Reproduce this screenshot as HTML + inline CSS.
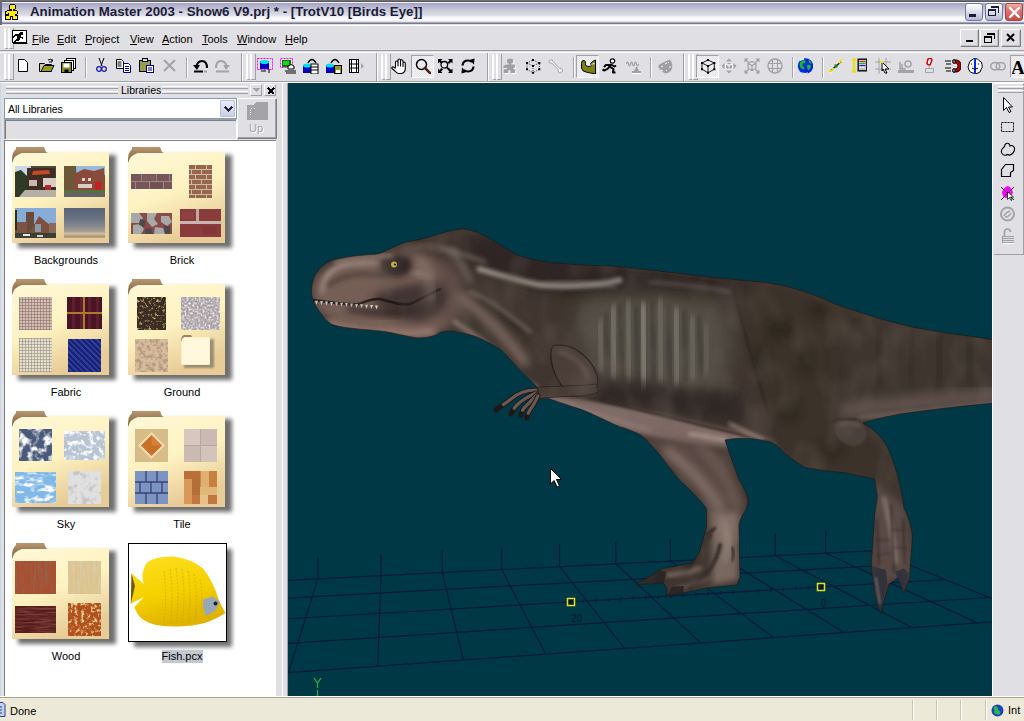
<!DOCTYPE html><html><head><meta charset="utf-8"><style>
*{margin:0;padding:0;box-sizing:border-box}
html,body{width:1024px;height:721px;overflow:hidden;background:#e0dfe3;font-family:"Liberation Sans",sans-serif;font-size:11px;color:#000;position:relative}
.a{position:absolute}
#title{left:0;top:0;width:1024px;height:26px;background:linear-gradient(#7a7060 0,#7a7060 1px,#505878 1px,#505878 2px,#f0f4f4 2px,#f0f4f4 3px,#a8a0c0 3px,#b4b4d0 6px,#c8cad8 10px,#dcdce8 15px,#f4f4f8 17px,#ffffff 20px,#d8d8e0 22px,#787898 23px,#787898 24px,#c8c8cc 24px,#ffffff 25px,#ffffff 26px)}
#ttext{left:30px;top:4px;font-weight:bold;font-size:13.3px;color:#1c1c38;white-space:nowrap}
.tbtn{top:3px;width:18px;height:18px;border:1px solid #7478a0;border-radius:3px;background:linear-gradient(#ffffff,#eaeaf2 35%,#b4b8d2)}
.mi{top:33px;font-size:11px;color:#000;white-space:nowrap}
.mi u{text-decoration:none;background:linear-gradient(#000,#000) 0 100%/100% 1px no-repeat;padding-bottom:0}
.grip{width:7px;}
.grip:before,.grip:after{content:"";position:absolute;top:0;bottom:0;width:3px;border-left:2px solid #fff;border-right:1px solid #a0a0a4;border-bottom:1px solid #a0a0a4}
.grip:before{left:0}.grip:after{left:4px}
.vsep{width:2px;border-left:1px solid #a6a6aa;border-right:1px solid #fff}
.press{border:1px solid;border-color:#a0a0a4 #fff #fff #a0a0a4;background:repeating-conic-gradient(#f4f4f6 0 25%,#e4e4e8 0 50%) 0 0/2px 2px}
.mdib{top:29px;width:19px;height:18px;border:1px solid;border-color:#fff #808080 #808080 #fff;box-shadow:inset -1px -1px 0 #c0c0c0}
.lbl{font-size:11px;color:#000;text-align:center;width:116px;white-space:nowrap;line-height:13px}
.th{position:absolute}
</style></head><body>
<div id="title" class="a"></div>
<div class="a" style="left:0;top:1px;width:2px;height:24px;background:#6a6a88"></div>
<svg class="a" style="left:0px;top:0px" width="24" height="24" viewBox="0 0 24 24" shape-rendering="crispEdges"><path d="M10.5 4.5h4l1 1v3l-1 1h-1v1h3l1 1v2l-1 1h-1v1h1.5l0.5 0.5v3.5h-5v-3h-2v3h-5v-3.5l0.5-0.5h2.5v-2l-1 1h-1.5l-1-1v-1l1-1l2-1h3v-1h-1l-1-1v-3z" fill="#ffee00" stroke="#000" stroke-width="1"/></svg>
<div id="ttext" class="a">Animation Master 2003 - Show6 V9.prj * - [TrotV10 [Birds Eye]]</div>
<div class="a tbtn" style="left:965px"><div class="a" style="left:3px;top:10px;width:7px;height:3px;background:#1c1c38"></div></div>
<div class="a tbtn" style="left:985px"><div class="a" style="left:2px;top:5px;width:8px;height:7px;border:1px solid #1c1c38;border-top-width:2px;background:transparent"></div><div class="a" style="left:5px;top:2px;width:8px;height:7px;border-top:2px solid #1c1c38;border-right:1px solid #1c1c38"></div></div>
<div class="a tbtn" style="left:1005px;border-color:#9a4848;background:linear-gradient(#f4b0a4,#e47a70 35%,#cc4a4a)"><svg class="a" style="left:2px;top:2px" width="13" height="13" viewBox="0 0 13 13"><path d="M2 2L11 11M11 2L2 11" stroke="#fff" stroke-width="2.4" stroke-linecap="round"/></svg></div>
<div class="a" style="left:0;top:26px;width:1024px;height:25px;background:#e0dfe3;border-bottom:1px solid #a0a0a4"></div>
<div class="a" style="left:0;top:52px;width:1024px;height:1px;background:#fff"></div>
<div class="a grip" style="left:4px;top:28px;height:21px"></div>
<svg class="a" style="left:12px;top:30px" width="16" height="16" viewBox="0 0 16 16" shape-rendering="crispEdges"><rect x="0.5" y="0.5" width="14" height="12" fill="#fff" stroke="#000"/><path d="M8 2h3v3h-2v2h2v2h-1v-1h-2v1l-2 2h-2v2h-2v-2l2-1l1-2v-2h-2l-2 2v-2l2-2h3z" fill="#000"/><path d="M1 13h14" stroke="#000"/><path d="M15 13.5h1" stroke="#20a060"/></svg>
<div class="a mi" style="left:32px"><u>F</u>ile</div>
<div class="a mi" style="left:57px"><u>E</u>dit</div>
<div class="a mi" style="left:85px"><u>P</u>roject</div>
<div class="a mi" style="left:130px"><u>V</u>iew</div>
<div class="a mi" style="left:162px"><u>A</u>ction</div>
<div class="a mi" style="left:202px"><u>T</u>ools</div>
<div class="a mi" style="left:237px"><u>W</u>indow</div>
<div class="a mi" style="left:285px"><u>H</u>elp</div>
<div class="a mdib" style="left:960px"><div class="a" style="left:5px;top:10px;width:7px;height:2px;background:#000"></div></div>
<div class="a mdib" style="left:980px"><div class="a" style="left:3px;top:6px;width:8px;height:7px;border:1px solid #000;border-top-width:2px"></div><div class="a" style="left:6px;top:3px;width:8px;height:6px;border-top:2px solid #000;border-right:1px solid #000"></div></div>
<div class="a mdib" style="left:1001px;width:20px"><svg class="a" style="left:4px;top:3px" width="10" height="10" viewBox="0 0 10 10" shape-rendering="crispEdges"><path d="M1 1l7 7M8 1l-7 7" stroke="#000" stroke-width="2" shape-rendering="auto"/></svg></div>
<div class="a" style="left:0;top:81px;width:1024px;height:1px;background:#a0a0a4"></div>
<div class="a" style="left:0;top:82px;width:1024px;height:1px;background:#fff"></div>
<div class="a grip" style="left:4px;top:54px;height:26px"></div>
<div class="a grip" style="left:246px;top:54px;height:26px"></div>
<div class="a grip" style="left:381px;top:54px;height:26px"></div>
<div class="a grip" style="left:492px;top:54px;height:26px"></div>
<div class="a grip" style="left:688px;top:54px;height:26px"></div>
<div class="a" style="left:241px;top:53px;width:1px;height:28px;background:#a0a0a4"></div>
<div class="a" style="left:242px;top:53px;width:1px;height:28px;background:#fff"></div>
<div class="a" style="left:376px;top:53px;width:1px;height:28px;background:#a0a0a4"></div>
<div class="a" style="left:377px;top:53px;width:1px;height:28px;background:#fff"></div>
<div class="a" style="left:487px;top:53px;width:1px;height:28px;background:#a0a0a4"></div>
<div class="a" style="left:488px;top:53px;width:1px;height:28px;background:#fff"></div>
<div class="a" style="left:683px;top:53px;width:1px;height:28px;background:#a0a0a4"></div>
<div class="a" style="left:684px;top:53px;width:1px;height:28px;background:#fff"></div>
<div class="a vsep" style="left:85px;top:57px;height:21px"></div>
<div class="a vsep" style="left:186px;top:57px;height:21px"></div>
<div class="a vsep" style="left:573px;top:57px;height:21px"></div>
<div class="a vsep" style="left:650px;top:57px;height:21px"></div>
<div class="a vsep" style="left:792px;top:57px;height:21px"></div>
<div class="a vsep" style="left:822px;top:57px;height:21px"></div>
<div class="a press" style="left:411px;top:55px;width:23px;height:23px"></div>
<div class="a press" style="left:576px;top:55px;width:23px;height:23px"></div>
<div class="a press" style="left:696px;top:55px;width:23px;height:23px"></div>
<div class="a press" style="left:1010px;top:55px;width:20px;height:23px"></div>
<svg class="a" style="left:17px;top:59px" width="16" height="16" viewBox="0 0 16 16"><path d="M1.5 0.5h6l3 3v9h-9z" fill="#fff" stroke="#000"/></svg>
<svg class="a" style="left:39px;top:58px" width="16" height="16" viewBox="0 0 16 16"><path d="M0.5 5.5h5l1 1h6v7h-12z" fill="#c8c890" stroke="#000"/><path d="M2 13.5l3-6h10l-3 6z" fill="#9a9a20" stroke="#000"/><path d="M9 2q3-2 5 1" fill="none" stroke="#000"/><path d="M13 1v3h-3" fill="none" stroke="#000"/></svg>
<svg class="a" style="left:61px;top:58px" width="16" height="16" viewBox="0 0 16 16"><rect x="5.5" y="0.5" width="9" height="10" fill="#fff" stroke="#000"/><rect x="3.5" y="2.5" width="9" height="10" fill="#fff" stroke="#000"/><rect x="0.5" y="4.5" width="10" height="10" fill="#8a8a20" stroke="#000"/><rect x="2.5" y="5.5" width="6" height="4" fill="#fff"/><rect x="3.5" y="11.5" width="4" height="3" fill="#000"/></svg>
<svg class="a" style="left:96px;top:58px" width="16" height="16" viewBox="0 0 16 16"><path d="M3 0l3 8M8 0l-3 8" stroke="#000" fill="none"/><circle cx="3" cy="11" r="2.3" fill="none" stroke="#1a1aa8" stroke-width="1.3"/><circle cx="8" cy="11" r="2.3" fill="none" stroke="#1a1aa8" stroke-width="1.3"/></svg>
<svg class="a" style="left:116px;top:58px" width="16" height="16" viewBox="0 0 16 16"><path d="M0.5 1.5h5l2 2v7h-7z" fill="#fff" stroke="#000"/><path d="M1.5 4h4M1.5 6h4M1.5 8h4" stroke="#000"/><path d="M7.5 5.5h5l2 2v7h-7z" fill="#fff" stroke="#000080"/><path d="M9 8.5h4M9 10.5h4M9 12.5h4" stroke="#000080"/></svg>
<svg class="a" style="left:139px;top:58px" width="16" height="16" viewBox="0 0 16 16"><rect x="0.5" y="2.5" width="11" height="11" fill="#9a9a50" stroke="#000"/><rect x="3.5" y="0.5" width="5" height="3" fill="#ddd" stroke="#000"/><rect x="7.5" y="7.5" width="7" height="7" fill="#fff" stroke="#000080"/><path d="M9 10h4M9 12h4" stroke="#000080"/></svg>
<svg class="a" style="left:163px;top:59px" width="16" height="16" viewBox="0 0 16 16"><path d="M1 1l11 11M12 1l-11 11" stroke="#a4a4a4" stroke-width="2"/></svg>
<svg class="a" style="left:193px;top:59px" width="16" height="16" viewBox="0 0 16 16"><path d="M3 9q1-7 6-7t5 7" fill="none" stroke="#000" stroke-width="2"/><path d="M0 6l4 5l3-5z" fill="#000"/><path d="M1 12.5h9" stroke="#000" stroke-width="2"/><path d="M11 12.5h3" stroke="#a4a4a4" stroke-width="2"/></svg>
<svg class="a" style="left:215px;top:59px" width="16" height="16" viewBox="0 0 16 16"><path d="M11 9q-1-7-6-7t-5 7" fill="none" stroke="#a4a4a4" stroke-width="2" transform="translate(1,0)"/><path d="M15 6l-4 5l-3-5z" fill="#a4a4a4"/><path d="M1 12.5h13" stroke="#a4a4a4" stroke-width="2"/></svg>
<svg class="a" style="left:257px;top:58px" width="16" height="16" viewBox="0 0 16 16"><rect x="0.5" y="0.5" width="15" height="11" fill="none" stroke="#ff00ff" stroke-dasharray="2 1"/><rect x="3" y="3" width="9" height="8" fill="#0000c0"/><ellipse cx="7.5" cy="4" rx="4.5" ry="2" fill="#00e0f0"/><path d="M4 13h5M12 11v4" stroke="#000"/></svg>
<svg class="a" style="left:280px;top:58px" width="16" height="16" viewBox="0 0 16 16"><rect x="0.5" y="0.5" width="12" height="9" fill="none" stroke="#ff00ff" stroke-dasharray="2 1"/><rect x="2" y="2" width="9" height="7" fill="#008000"/><path d="M3 3h6v4h-6z" fill="#20d020"/><path d="M8 8q3-3 6 0v3h-6z" fill="#fff" stroke="#000"/><path d="M5 13h11M6 15h10" stroke="#000"/></svg>
<svg class="a" style="left:303px;top:58px" width="16" height="16" viewBox="0 0 16 16"><path d="M5 5q4-7 8 0" fill="none" stroke="#000" stroke-width="1.5"/><rect x="0" y="7" width="8" height="8" fill="#0000c0"/><ellipse cx="4" cy="7.5" rx="4" ry="2" fill="#00e0f0"/><rect x="8" y="6" width="7" height="10" fill="#fff" stroke="#000"/><path d="M8 9h7M8 12h7" stroke="#000"/></svg>
<svg class="a" style="left:326px;top:58px" width="16" height="16" viewBox="0 0 16 16"><path d="M5 5q4-7 8 0" fill="none" stroke="#000" stroke-width="1.5"/><rect x="0" y="7" width="8" height="8" fill="#0000c0"/><ellipse cx="4" cy="7.5" rx="4" ry="2" fill="#00e0f0"/><rect x="8.5" y="7.5" width="7" height="8" fill="#9a9a20" stroke="#000"/><rect x="10" y="12" width="4" height="3" fill="#fff"/></svg>
<svg class="a" style="left:349px;top:58px" width="16" height="16" viewBox="0 0 16 16"><rect x="0.5" y="1.5" width="9" height="13" fill="#fff" stroke="#000"/><path d="M2.5 1.5v13M7.5 1.5v13M0.5 6h9M0.5 10h9" stroke="#000"/><path d="M12 5l3 3l-3 3z" fill="#a4a4a4"/></svg>
<svg class="a" style="left:391px;top:58px" width="16" height="16" viewBox="0 0 16 16"><path d="M4.5 9.5V4.5Q4.5 3 5.7 3Q7 3 7 4.5V8V2.5Q7 1 8.3 1Q9.5 1 9.5 2.5V8V3Q9.5 1.8 10.7 1.8Q12 1.8 12 3V8.5V5Q12 4 13 4Q14.3 4 14.3 5.2V10.5Q14.3 15 10 15.5H7.5Q5.5 15 4 13L1 10.5Q0.5 9.5 1.5 9Q2.5 8.5 4.5 10.5" fill="#fff" stroke="#000" stroke-width="1.1" stroke-linejoin="round"/></svg>
<svg class="a" style="left:415px;top:58px" width="16" height="16" viewBox="0 0 16 16"><circle cx="6.5" cy="6.5" r="5" fill="none" stroke="#000" stroke-width="1.5"/><path d="M10 10l5 5" stroke="#501818" stroke-width="2.5" stroke-linecap="square"/></svg>
<svg class="a" style="left:437px;top:58px" width="16" height="16" viewBox="0 0 16 16"><path d="M1 1h4.5l-1.5 1.5l2 2l-1.5 1.5l-2-2l-1.5 1.5zM15.5 1h-4.5l1.5 1.5l-2 2l1.5 1.5l2-2l1.5 1.5zM1 15h4.5l-1.5-1.5l2-2l-1.5-1.5l-2 2l-1.5-1.5zM15.5 15h-4.5l1.5-1.5l-2-2l1.5-1.5l2 2l1.5-1.5z" fill="#000"/><circle cx="7.3" cy="6.8" r="3.3" fill="#e8e8e8" stroke="#000" stroke-width="1.3"/><path d="M9.8 9.3l3 3" stroke="#000" stroke-width="1.8"/></svg>
<svg class="a" style="left:460px;top:58px" width="16" height="16" viewBox="0 0 16 16"><path d="M2.5 7.5Q3 2.5 8 2.5Q10.5 2.5 12 4" fill="none" stroke="#000" stroke-width="2.2"/><path d="M9.5 2L14.5 0.5L14 6.5Z" fill="#000"/><path d="M13.5 8.5Q13 13.5 8 13.5Q5.5 13.5 4 12" fill="none" stroke="#000" stroke-width="2.2"/><path d="M6.5 14L1.5 15.5L2 9.5Z" fill="#000"/></svg>
<svg class="a" style="left:503px;top:58px" width="16" height="16" viewBox="0 0 16 16"><g transform="translate(-4.5,-3.5) scale(0.95)"><path d="M10.5 4.5h4l1 1v3l-1 1h-1v1h3l1 1v2l-1 1h-1v1h1.5l0.5 0.5v3.5h-5v-3h-2v3h-5v-3.5l0.5-0.5h2.5v-2l-1 1h-1.5l-1-1v-1l1-1l2-1h3v-1h-1l-1-1v-3z" fill="#fff" transform="translate(1,1)"/><path d="M10.5 4.5h4l1 1v3l-1 1h-1v1h3l1 1v2l-1 1h-1v1h1.5l0.5 0.5v3.5h-5v-3h-2v3h-5v-3.5l0.5-0.5h2.5v-2l-1 1h-1.5l-1-1v-1l1-1l2-1h3v-1h-1l-1-1v-3z" fill="#a0a0a4"/></g></svg>
<svg class="a" style="left:525px;top:58px" width="16" height="16" viewBox="0 0 16 16"><path d="M8 2L14.3 5V11.2L8 14.8L2 11.2V5Z M2 5L8 8L14.3 5 M8 8V14.8" fill="none" stroke="#000" stroke-width="0.7" stroke-dasharray="1 1"/><path d="M7 1h2v2h-2zM13.3 4h2v2h-2zM13.3 10.2h2v2h-2zM7 13.8h2v2h-2zM1 10.2h2v2h-2zM1 4h2v2h-2zM7 7h2v2h-2z" fill="#000"/></svg>
<svg class="a" style="left:548px;top:58px" width="16" height="16" viewBox="0 0 16 16"><path d="M2.5 2.2 Q4.5 1 5 3.5 L11.5 10.5 Q14 10 14.5 12 Q15 14 13 14 Q13 15.5 11 15 Q10 13 10.5 12 L3.8 5 Q1 5.5 1 3.8 Q1 2 2.5 2.2Z" fill="#fff" stroke="#a0a0a4" stroke-width="1"/></svg>
<svg class="a" style="left:580px;top:58px" width="16" height="16" viewBox="0 0 16 16"><path d="M1.5 5.5 Q1.5 2 4 2.5 Q6 3 5.5 5.5 Q5 7 6.5 8 Q9 9.5 11.5 7.5 L10.5 5.5 L12.5 3.5 L15.5 2 L15.5 16 L10.5 15 Q8 14.5 6 14 Q2 13.5 1.5 10 Z" fill="#808010" stroke="#000" stroke-width="1"/><path d="M11 7.5 L13 5.5 L15 6" stroke="#fff" stroke-width="0.8" fill="none"/></svg>
<svg class="a" style="left:601px;top:58px" width="16" height="16" viewBox="0 0 16 16"><circle cx="11.5" cy="3" r="2.2" fill="#fff" stroke="#000" stroke-width="1.2"/><path d="M10 6 L7 10.5 L3.5 12.5 L1.5 11.5 M8.5 8.5 L12.5 11 L12 14.5 L14.5 14.5 M8.5 7 L5 7 L3 9 M10 6.5 L13.5 8.5 L15 7.5" fill="none" stroke="#000" stroke-width="2" stroke-linejoin="round"/></svg>
<svg class="a" style="left:625px;top:58px" width="16" height="16" viewBox="0 0 16 16"><path d="M0.5 5 q1-4 2 0 q1 4 2 0 q1-4 2 0 q1 4 2 0 q1-4 2 0 q1 4 2 0" fill="none" stroke="#a0a0a4" stroke-width="1.2" transform="translate(1,1)"/><path d="M11 9 L9 13 L7 13 L7 15 L16 15 L16 13 L14 13 L12 9Z" fill="#a0a0a4"/><path d="M7 15.5h9" stroke="#fff"/></svg>
<svg class="a" style="left:657px;top:58px" width="16" height="16" viewBox="0 0 16 16"><path d="M1 8 Q3 5 13 1.5 Q16 5 15 11 Q13 15 8 15.5 Q3 13 1 8Z" fill="#a0a0a4"/><path d="M4 9l2-1M8 6l2-1M11 4l1 1M13 8l0 2M10 12l-1 1M6 13l-2-1" stroke="#fff" stroke-width="0.9"/></svg>
<svg class="a" style="left:700px;top:58px" width="16" height="16" viewBox="0 0 16 16"><path d="M8 2L14.3 5V11.2L8 14.8L2 11.2V5Z M2 5L8 8L14.3 5 M8 8V14.8" fill="none" stroke="#000" stroke-width="0.9"/><path d="M7 1h2v2h-2zM13.3 4h2v2h-2zM13.3 10.2h2v2h-2zM7 13.8h2v2h-2zM1 10.2h2v2h-2zM1 4h2v2h-2zM7 7h2v2h-2z" fill="#000"/></svg>
<svg class="a" style="left:721px;top:58px" width="16" height="16" viewBox="0 0 16 16"><path d="M8 0.5l3 3h-6zM8 15.5l3-3h-6zM0.5 8l3-3v6zM15.5 8l-3-3v6z" fill="#a0a0a4"/><path d="M8 4L11.5 6V10L8 12L4.5 10V6Z M4.5 6L8 8L11.5 6M8 8V12" fill="#a0a0a4" stroke="#fff" stroke-width="0.8"/></svg>
<svg class="a" style="left:744px;top:58px" width="16" height="16" viewBox="0 0 16 16"><path d="M0.5 0.5h4l-1.5 1.5l2 2l-1 1l-2-2l-1.5 1.5zM15.5 0.5h-4l1.5 1.5l-2 2l1 1l2-2l1.5 1.5zM0.5 15.5h4l-1.5-1.5l2-2l-1-1l-2 2l-1.5-1.5zM15.5 15.5h-4l1.5-1.5l-2-2l1-1l2 2l1.5-1.5z" fill="#a0a0a4"/><path d="M8 3.5L12 5.5V10.5L8 12.5L4 10.5V5.5Z M4 5.5L8 7.5L12 5.5M8 7.5V12.5" fill="none" stroke="#a0a0a4" stroke-width="1.2"/></svg>
<svg class="a" style="left:767px;top:58px" width="16" height="16" viewBox="0 0 16 16"><circle cx="8" cy="8" r="7" fill="none" stroke="#a0a0a4" stroke-width="1.3"/><path d="M1.5 5.5h13M1.5 10.5h13M5.5 1.5v13M10.5 1.5v13" stroke="#a0a0a4" stroke-width="1.1"/></svg>
<svg class="a" style="left:797px;top:58px" width="16" height="16" viewBox="0 0 16 16"><circle cx="8.5" cy="8" r="7.7" fill="#0028e0"/><path d="M3 4.5q2-3 5-2.5q1 2 0 3q-3 0-2.5 3q2 1 2 3q-2 1-3.5-1q-2-2-1-5.5z" fill="#10c020"/><path d="M10 7q3-1 4 1q-1 4-3 4q-1-2-1-5z" fill="#10c020"/><path d="M11 1.5q3 1 4 4l-2 0z" fill="#10c020"/><path d="M3 2.5q2-1.5 4-1.5" stroke="#fff" stroke-width="1.5"/><path d="M5 15q3 1 6 0" stroke="#fff" stroke-width="1"/></svg>
<svg class="a" style="left:828px;top:58px" width="16" height="16" viewBox="0 0 16 16"><path d="M2 13.5L8 8L14 3" stroke="#000" stroke-width="1.2" fill="none"/><path d="M1 11.5h3v3h-3zM4 10h2v2h-2zM12.5 1.5h3v3h-3zM10.5 3.5h2v2h-2z" fill="#f0e010"/><rect x="6.5" y="6.5" width="3" height="3" fill="#108a10"/><path d="M1.5 15h2M15 2v2" stroke="#fff"/></svg>
<svg class="a" style="left:851px;top:58px" width="16" height="16" viewBox="0 0 16 16"><path d="M1 1.5h4M3 1.5v12M1 13.5h4" stroke="#f0e010" stroke-width="2.4"/><rect x="7" y="1" width="9" height="12" fill="#404040" stroke="#000"/><rect x="8" y="2" width="7" height="10" fill="#c0c0c8"/><path d="M8.5 3.5h6" stroke="#e02020"/><path d="M8.5 5.5h6" stroke="#10c010"/><path d="M8.5 7.5h6" stroke="#2020e0"/><path d="M8.5 9.5h2M11.5 9.5h2" stroke="#fff"/></svg>
<svg class="a" style="left:875px;top:58px" width="16" height="16" viewBox="0 0 16 16"><path d="M0 4h16M0 11h16M4 0v16M11 0v16" stroke="#a4a4a4"/><path d="M7 4l7 7h-4l2 4h-2l-2-4l-1 2z" fill="#fff" stroke="#000"/><path d="M5 3h3v2h-3z" fill="#f0f000"/></svg>
<svg class="a" style="left:898px;top:58px" width="16" height="16" viewBox="0 0 16 16"><path d="M0 12h16v3h-16z" fill="#a4a4a4"/><path d="M2 4v7h6M4 6v5" stroke="#a4a4a4" stroke-width="1.5" fill="none"/><circle cx="10" cy="6" r="3" fill="none" stroke="#a4a4a4" stroke-width="1.5"/></svg>
<svg class="a" style="left:924px;top:58px" width="16" height="16" viewBox="0 0 16 16"><path d="M4 1q3-2 4 1l-2 5q-3 0-3-2z" fill="#fff" stroke="#e00000" stroke-width="1.5"/><path d="M5 7v4M1.5 10.5h8v4h-8z" fill="none" stroke="#a4a4a4"/></svg>
<svg class="a" style="left:945px;top:58px" width="16" height="16" viewBox="0 0 16 16"><path d="M8 2h3q5 0 5 6t-5 6h-3v-3h3q2 0 2-3t-2-3h-3z" fill="#c00000" stroke="#000"/><path d="M8 2h2v3h-2zM8 11h2v3h-2z" fill="#fff" stroke="#000"/><path d="M0 3h6M1 6h5M0 10h6M1 13h5" stroke="#000"/></svg>
<svg class="a" style="left:967px;top:58px" width="16" height="16" viewBox="0 0 16 16"><path d="M8 0.5q3 0 4 2q3 1 3 4q1 3-1 5q0 3-3 3.5q-2 1.5-5 0q-3 0-4-3q-2-3 0-6q0-3 3-4q1-1.5 3-1.5z" fill="#fff" stroke="#000"/><path d="M8 0v16" stroke="#0030e0" stroke-width="2"/><path d="M4 6h1M11 6h1M5 10q3 3 6 0" stroke="#000" fill="none"/></svg>
<svg class="a" style="left:990px;top:58px" width="16" height="16" viewBox="0 0 16 16"><rect x="0.75" y="4.75" width="9" height="7" rx="3.5" fill="none" stroke="#a4a4a4" stroke-width="1.5"/><rect x="6.25" y="4.75" width="9" height="7" rx="3.5" fill="none" stroke="#a4a4a4" stroke-width="1.5"/></svg>
<svg class="a" style="left:1012px;top:58px" width="16" height="16" viewBox="0 0 16 16"><text x="-1" y="16" font-family="Liberation Serif" font-size="19" font-weight="bold" fill="#000">A</text></svg>
<div class="a" style="left:6px;top:86px;width:112px;height:3px;border-top:1px solid #fff;border-bottom:1px solid #a0a0a4;background:#e0dfe3"></div>
<div class="a" style="left:162px;top:86px;width:86px;height:3px;border-top:1px solid #fff;border-bottom:1px solid #a0a0a4;background:#e0dfe3"></div>
<div class="a" style="left:6px;top:91px;width:112px;height:3px;border-top:1px solid #fff;border-bottom:1px solid #a0a0a4;background:#e0dfe3"></div>
<div class="a" style="left:162px;top:91px;width:86px;height:3px;border-top:1px solid #fff;border-bottom:1px solid #a0a0a4;background:#e0dfe3"></div>
<div class="a" style="left:121px;top:84px;font-size:10.5px;line-height:13px">Libraries</div>
<div class="a" style="left:250px;top:84px;width:12px;height:12px;border:1px solid;border-color:#fff #a0a0a4 #a0a0a4 #fff"><svg class="a" style="left:2px;top:3px" width="7" height="5" viewBox="0 0 7 5" shape-rendering="crispEdges"><path d="M0 0h7l-3.5 4z" fill="#a4a4a4"/></svg></div>
<div class="a" style="left:264px;top:84px;width:12px;height:12px;border:1px solid;border-color:#fff #a0a0a4 #a0a0a4 #fff"><svg class="a" style="left:2px;top:2px" width="8" height="8" viewBox="0 0 8 8" shape-rendering="crispEdges"><path d="M1 1l6 6M7 1l-6 6" stroke="#000" stroke-width="2"/></svg></div>
<div class="a" style="left:4px;top:98px;width:233px;height:21px;background:#fff;border:1px solid #7f9db9"></div>
<div class="a" style="left:8px;top:103px;font-size:10.5px;line-height:13px">All Libraries</div>
<div class="a" style="left:220px;top:100px;width:15px;height:17px;border:1px solid #b8c0d8;border-radius:1px;background:linear-gradient(#e8ecf8,#c8d0e8)"><svg class="a" style="left:3px;top:5px" width="9" height="7" viewBox="0 0 9 7" shape-rendering="crispEdges"><path d="M1 1l3.5 3.5l3.5-3.5" stroke="#202030" stroke-width="2" fill="none"/></svg></div>
<div class="a" style="left:4px;top:119px;width:233px;height:21px;border:1px solid;border-color:#a0a0a4 #fff #fff #a0a0a4;background:#e0dfe3"></div>
<div class="a" style="left:5px;top:120px;width:231px;height:19px;border-top:1px solid #808084;border-left:1px solid #808084"></div>
<div class="a" style="left:237px;top:98px;width:40px;height:41px;border:1px solid;border-color:#fff #808084 #808084 #fff;box-shadow:inset -1px -1px 0 #a0a0a4"></div>
<svg class="a" style="left:247px;top:102px" width="21" height="18" viewBox="0 0 21 18" shape-rendering="crispEdges"><path d="M0 3h7l2-3h12v18h-21z" fill="#a4a4a8"/><path d="M4 6h1M3 8h1M3 10h1M3 12h1M7 6h1" stroke="#fff"/></svg>
<div class="a" style="left:249px;top:122px;font-size:11px;color:#a4a4a8;line-height:13px;text-shadow:1px 1px 0 #fff">Up</div>
<div class="a" style="left:276px;top:140px;width:6px;height:556px;background:#e0dfe3"></div>
<div class="a" style="left:282px;top:83px;width:1px;height:613px;background:#fff"></div>
<div class="a" style="left:287px;top:83px;width:1px;height:613px;background:#a0a0a4"></div>
<div class="a" style="left:0;top:83px;width:1px;height:613px;background:#c8d8e8"></div>
<div class="a" style="left:4px;top:140px;width:272px;height:556px;background:#fff;border-left:1px solid #808084;border-top:1px solid #808084"></div>
<svg class="a" style="left:10px;top:145px" width="112" height="112" viewBox="0 0 112 112"><defs><filter id="sh" x="-20%" y="-20%" width="150%" height="150%"><feGaussianBlur stdDeviation="2.2"/></filter><linearGradient id="fb" x1="0" y1="0" x2="0.4" y2="1"><stop offset="0" stop-color="#fff8d8"/><stop offset="0.55" stop-color="#fdf2c0"/><stop offset="1" stop-color="#e8cc98"/></linearGradient><linearGradient id="tb" x1="0" y1="0" x2="0" y2="1"><stop offset="0" stop-color="#b89870"/><stop offset="1" stop-color="#7a5a3a"/></linearGradient></defs><rect x="8" y="10" width="98" height="93" fill="#404040" opacity="0.75" filter="url(#sh)"/><rect x="2" y="7" width="97" height="91" fill="url(#fb)"/><path d="M2 16 Q2 7 6 4 L6 2 L34 2 L36 7 L38 8 L12 8 Q4 10 2 18 Z" fill="url(#tb)"/></svg><svg class="th" style="left:15px;top:166px" width="41" height="31" viewBox="0 0 41 31" preserveAspectRatio="none"><rect width="41" height="31" fill="#4a4a3a"/><rect width="16" height="14" fill="#c8d8e8"/><path d="M0 6 L6 4 L12 10 L12 31 L0 31Z" fill="#2e3a26"/><path d="M12 2 L40 2 L41 26 L12 28Z" fill="#3e2e24"/><path d="M18 5 L34 4 L35 8 L17 9Z" fill="#c84a24"/><rect x="28" y="12" width="13" height="9" fill="#d8ccc4"/><rect x="30" y="19" width="6" height="7" fill="#b02828"/><path d="M4 31 L10 24 L41 24 L41 31Z" fill="#b4b0a8"/><rect x="14" y="14" width="8" height="6" fill="#c8b8b0"/></svg><svg class="th" style="left:64px;top:166px" width="41" height="31" viewBox="0 0 41 31" preserveAspectRatio="none"><rect width="41" height="31" fill="#7a5040"/><rect width="41" height="9" fill="#98b8dc"/><path d="M0 0 L12 0 L13 27 L0 27Z" fill="#6a5838"/><path d="M10 8 L20 3 L30 5 L40 2 L41 26 L10 26Z" fill="#8a4a3a"/><rect x="18" y="12" width="3" height="3" fill="#e0d8d0"/><rect x="24" y="12" width="3" height="3" fill="#e0d8d0"/><rect x="14" y="18" width="14" height="4" fill="#d8d0c8"/><rect x="31" y="16" width="6" height="8" fill="#c82020"/><rect y="24" width="41" height="3" fill="#587040"/><rect y="27" width="41" height="4" fill="#646468"/></svg><svg class="th" style="left:15px;top:208px" width="41" height="30" viewBox="0 0 41 30" preserveAspectRatio="none"><rect width="41" height="30" fill="#6a4a3a"/><rect width="41" height="16" fill="#88acd8"/><rect x="11" y="4" width="8" height="16" fill="#6a4a3a"/><path d="M14 26 L24 8 L36 18 L36 26Z" fill="#80503e"/><rect x="2" y="14" width="10" height="12" fill="#7a5444"/><rect x="34" y="15" width="7" height="11" fill="#8a6a5a"/><rect x="20" y="16" width="6" height="8" fill="#8a9aa8"/><rect y="25" width="41" height="5" fill="#3a4034"/><rect x="8" y="26" width="7" height="2" fill="#e8e8e8"/><rect x="22" y="27" width="6" height="2" fill="#d0d0d0"/><rect x="0" y="2" width="2" height="20" fill="#2a3020"/></svg><div class="th" style="left:64px;top:208px;width:41px;height:30px;background:linear-gradient(#596378 0,#687284 35%,#868a90 62%,#a8a090 78%,#d0c0a0 86%,#a89478 94%,#c0a880 100%)"></div><div class="a lbl" style="left:8px;top:254px">Backgrounds</div>
<svg class="a" style="left:126px;top:145px" width="112" height="112" viewBox="0 0 112 112"><defs><filter id="sh" x="-20%" y="-20%" width="150%" height="150%"><feGaussianBlur stdDeviation="2.2"/></filter><linearGradient id="fb" x1="0" y1="0" x2="0.4" y2="1"><stop offset="0" stop-color="#fff8d8"/><stop offset="0.55" stop-color="#fdf2c0"/><stop offset="1" stop-color="#e8cc98"/></linearGradient><linearGradient id="tb" x1="0" y1="0" x2="0" y2="1"><stop offset="0" stop-color="#b89870"/><stop offset="1" stop-color="#7a5a3a"/></linearGradient></defs><rect x="8" y="10" width="98" height="93" fill="#404040" opacity="0.75" filter="url(#sh)"/><rect x="2" y="7" width="97" height="91" fill="url(#fb)"/><path d="M2 16 Q2 7 6 4 L6 2 L34 2 L36 7 L38 8 L12 8 Q4 10 2 18 Z" fill="url(#tb)"/></svg><svg class="th" style="left:131px;top:174px" width="41" height="15" viewBox="0 0 41 15" preserveAspectRatio="none"><rect width="41" height="15" fill="#765658"/><path d="M0 7.5h41M10.5 0v7M25.5 0v7M38.5 0v7M4.5 8v7M18.5 8v7M32.5 8v7" stroke="#9a8684" stroke-width="1"/><rect x="12" y="1" width="12" height="5" fill="#7e5c5c"/><rect x="20" y="9" width="11" height="5" fill="#6e5050"/></svg><svg class="th" style="left:189px;top:165px" width="23" height="33" viewBox="0 0 23 33" preserveAspectRatio="none"><rect width="23" height="33" fill="#98664c"/><path d="M0 4.5h23M0 9.5h23M0 14.5h23M0 19.5h23M0 24.5h23M0 29.5h23M6.5 0v4M17.5 0v4M2.5 5v4M12.5 5v4M6.5 10v4M17.5 10v4M2.5 15v4M12.5 15v4M6.5 20v4M17.5 20v4M2.5 25v4M12.5 25v4M6.5 30v3M17.5 30v3" stroke="#cabca6" stroke-width="1"/></svg><svg class="th" style="left:131px;top:213px" width="41" height="21" viewBox="0 0 41 21" preserveAspectRatio="none"><rect width="41" height="21" fill="#8a4a4a"/><path d="M0 0h8l4 5l-4 5h-8z M16 0h10l-3 6l4 5l-6 3l-5-6z M30 3h8l3 6l-5 4l-6-4z M2 12l7-1l4 5l-3 5h-8z M24 14l8 1l2 6h-11z" fill="#a8a8a8"/><path d="M9 6l6 2l-2 6l-5-2z M33 12l6 2v7h-5z M14 16l6-1l2 6h-8z" fill="#4a4a4a"/></svg><svg class="th" style="left:180px;top:209px" width="41" height="28" viewBox="0 0 41 28" preserveAspectRatio="none"><rect width="41" height="28" fill="#8a3c3c"/><rect x="0" y="12" width="41" height="3" fill="#c8b6ae"/><rect x="16" y="0" width="3" height="12" fill="#c0a8a0"/><rect x="2" y="3" width="12" height="7" fill="#944444" opacity="0.6"/><rect x="22" y="17" width="15" height="8" fill="#7e3434" opacity="0.6"/></svg><div class="a lbl" style="left:124px;top:254px">Brick</div>
<svg class="a" style="left:10px;top:277px" width="112" height="112" viewBox="0 0 112 112"><defs><filter id="sh" x="-20%" y="-20%" width="150%" height="150%"><feGaussianBlur stdDeviation="2.2"/></filter><linearGradient id="fb" x1="0" y1="0" x2="0.4" y2="1"><stop offset="0" stop-color="#fff8d8"/><stop offset="0.55" stop-color="#fdf2c0"/><stop offset="1" stop-color="#e8cc98"/></linearGradient><linearGradient id="tb" x1="0" y1="0" x2="0" y2="1"><stop offset="0" stop-color="#b89870"/><stop offset="1" stop-color="#7a5a3a"/></linearGradient></defs><rect x="8" y="10" width="98" height="93" fill="#404040" opacity="0.75" filter="url(#sh)"/><rect x="2" y="7" width="97" height="91" fill="url(#fb)"/><path d="M2 16 Q2 7 6 4 L6 2 L34 2 L36 7 L38 8 L12 8 Q4 10 2 18 Z" fill="url(#tb)"/></svg><div class="th" style="left:19px;top:297px;width:33px;height:33px;background:repeating-linear-gradient(0deg,rgba(120,90,80,.45) 0 1px,transparent 1px 3px),repeating-linear-gradient(90deg,rgba(120,90,80,.45) 0 1px,transparent 1px 3px),#d4beb6"></div><div class="th" style="left:67px;top:297px;width:35px;height:32px;background:linear-gradient(90deg,transparent 46%,#b07828 46% 52%,transparent 52%),linear-gradient(transparent 46%,#b07828 46% 52%,transparent 52%),repeating-linear-gradient(90deg,#4a1424 0 5px,#5a2030 5px 8px),#501828"></div><div class="th" style="left:19px;top:338px;width:33px;height:34px;background:repeating-linear-gradient(0deg,rgba(140,130,110,.5) 0 1px,transparent 1px 3px),repeating-linear-gradient(90deg,rgba(140,130,110,.5) 0 1px,transparent 1px 3px),#e6e0d2"></div><div class="th" style="left:68px;top:339px;width:33px;height:33px;background:repeating-linear-gradient(45deg,#18226e 0 2px,#2c3ca0 2px 4px)"></div><div class="a lbl" style="left:8px;top:386px">Fabric</div>
<svg class="a" style="left:126px;top:277px" width="112" height="112" viewBox="0 0 112 112"><defs><filter id="sh" x="-20%" y="-20%" width="150%" height="150%"><feGaussianBlur stdDeviation="2.2"/></filter><linearGradient id="fb" x1="0" y1="0" x2="0.4" y2="1"><stop offset="0" stop-color="#fff8d8"/><stop offset="0.55" stop-color="#fdf2c0"/><stop offset="1" stop-color="#e8cc98"/></linearGradient><linearGradient id="tb" x1="0" y1="0" x2="0" y2="1"><stop offset="0" stop-color="#b89870"/><stop offset="1" stop-color="#7a5a3a"/></linearGradient></defs><rect x="8" y="10" width="98" height="93" fill="#404040" opacity="0.75" filter="url(#sh)"/><rect x="2" y="7" width="97" height="91" fill="url(#fb)"/><path d="M2 16 Q2 7 6 4 L6 2 L34 2 L36 7 L38 8 L12 8 Q4 10 2 18 Z" fill="url(#tb)"/></svg><svg class="th" style="left:137px;top:297px" width="29" height="33" viewBox="0 0 29 33" preserveAspectRatio="none"><defs><filter id="n1" x="0" y="0" width="100%" height="100%"><feTurbulence type="fractalNoise" baseFrequency="0.35" numOctaves="3" seed="2"/><feColorMatrix values="0 0 0 0 0.85  0 0 0 0 0.65  0 0 0 0 0.25  3 0 0 0 -1.6"/></filter></defs><rect width="29" height="33" fill="#3a2c22"/><rect width="29" height="33" filter="url(#n1)"/></svg><svg class="th" style="left:181px;top:297px" width="39" height="33" viewBox="0 0 39 33" preserveAspectRatio="none"><defs><filter id="n2" x="0" y="0" width="100%" height="100%"><feTurbulence type="fractalNoise" baseFrequency="0.5" numOctaves="3" seed="4"/><feColorMatrix values="0 0 0 0 0.92  0 0 0 0 0.9  0 0 0 0 0.92  2.5 0 0 0 -1.0"/></filter></defs><rect width="39" height="33" fill="#a89ea2"/><rect width="39" height="33" filter="url(#n2)"/></svg><svg class="th" style="left:135px;top:339px" width="33" height="33" viewBox="0 0 33 33" preserveAspectRatio="none"><defs><filter id="n3" x="0" y="0" width="100%" height="100%"><feTurbulence type="fractalNoise" baseFrequency="0.25" numOctaves="3" seed="7"/><feColorMatrix values="0 0 0 0 0.45  0 0 0 0 0.32  0 0 0 0 0.22  -4 0 0 0 2.3"/></filter></defs><rect width="33" height="33" fill="#d8bc9c"/><rect width="33" height="33" filter="url(#n3)"/></svg><svg class="th" style="left:181px;top:335px" width="34" height="34" viewBox="0 0 34 34" preserveAspectRatio="none"><defs><filter id="msh"><feGaussianBlur stdDeviation="1"/></filter></defs><rect x="3" y="4" width="30" height="29" fill="#606060" opacity="0.6" filter="url(#msh)"/><rect x="0" y="2" width="29" height="28" rx="1.5" fill="#fdf0c8"/><rect x="1" y="3" width="27" height="26" fill="#fff8dc"/><path d="M0 6 Q0 1 3 0 H10 L11 2 H3 Q1 3 0 7Z" fill="#a08060"/></svg><div class="a lbl" style="left:124px;top:386px">Ground</div>
<svg class="a" style="left:10px;top:409px" width="112" height="112" viewBox="0 0 112 112"><defs><filter id="sh" x="-20%" y="-20%" width="150%" height="150%"><feGaussianBlur stdDeviation="2.2"/></filter><linearGradient id="fb" x1="0" y1="0" x2="0.4" y2="1"><stop offset="0" stop-color="#fff8d8"/><stop offset="0.55" stop-color="#fdf2c0"/><stop offset="1" stop-color="#e8cc98"/></linearGradient><linearGradient id="tb" x1="0" y1="0" x2="0" y2="1"><stop offset="0" stop-color="#b89870"/><stop offset="1" stop-color="#7a5a3a"/></linearGradient></defs><rect x="8" y="10" width="98" height="93" fill="#404040" opacity="0.75" filter="url(#sh)"/><rect x="2" y="7" width="97" height="91" fill="url(#fb)"/><path d="M2 16 Q2 7 6 4 L6 2 L34 2 L36 7 L38 8 L12 8 Q4 10 2 18 Z" fill="url(#tb)"/></svg><svg class="th" style="left:19px;top:429px" width="33" height="32" viewBox="0 0 33 32" preserveAspectRatio="none"><defs><filter id="s1" x="0" y="0" width="100%" height="100%"><feTurbulence type="fractalNoise" baseFrequency="0.12" numOctaves="3" seed="3"/><feColorMatrix values="0 0 0 0 1  0 0 0 0 1  0 0 0 0 1  4 0 0 0 -1.9"/></filter></defs><rect width="33" height="32" fill="#4a5a7a"/><rect width="33" height="32" filter="url(#s1)"/></svg><svg class="th" style="left:64px;top:431px" width="41" height="29" viewBox="0 0 41 29" preserveAspectRatio="none"><defs><filter id="s2" x="0" y="0" width="100%" height="100%"><feTurbulence type="fractalNoise" baseFrequency="0.2" numOctaves="3" seed="5"/><feColorMatrix values="0 0 0 0 1  0 0 0 0 1  0 0 0 0 1  4 0 0 0 -1.9"/></filter></defs><rect width="41" height="29" fill="#b8c4d4"/><rect width="41" height="29" filter="url(#s2)"/></svg><svg class="th" style="left:15px;top:472px" width="41" height="31" viewBox="0 0 41 31" preserveAspectRatio="none"><defs><filter id="s3" x="0" y="0" width="100%" height="100%"><feTurbulence type="fractalNoise" baseFrequency="0.1 0.2" numOctaves="3" seed="9"/><feColorMatrix values="0 0 0 0 1  0 0 0 0 1  0 0 0 0 1  4 0 0 0 -1.9"/></filter></defs><rect width="41" height="31" fill="#80b8e8"/><rect width="41" height="31" filter="url(#s3)"/></svg><svg class="th" style="left:68px;top:471px" width="33" height="33" viewBox="0 0 33 33" preserveAspectRatio="none"><defs><filter id="s4" x="0" y="0" width="100%" height="100%"><feTurbulence type="fractalNoise" baseFrequency="0.15" numOctaves="3" seed="11"/><feColorMatrix values="0 0 0 0 0.55  0 0 0 0 0.55  0 0 0 0 0.56  -4 0 0 0 2.0"/></filter></defs><rect width="33" height="33" fill="#e0e0e0"/><rect width="33" height="33" filter="url(#s4)"/></svg><div class="a lbl" style="left:8px;top:518px">Sky</div>
<svg class="a" style="left:126px;top:409px" width="112" height="112" viewBox="0 0 112 112"><defs><filter id="sh" x="-20%" y="-20%" width="150%" height="150%"><feGaussianBlur stdDeviation="2.2"/></filter><linearGradient id="fb" x1="0" y1="0" x2="0.4" y2="1"><stop offset="0" stop-color="#fff8d8"/><stop offset="0.55" stop-color="#fdf2c0"/><stop offset="1" stop-color="#e8cc98"/></linearGradient><linearGradient id="tb" x1="0" y1="0" x2="0" y2="1"><stop offset="0" stop-color="#b89870"/><stop offset="1" stop-color="#7a5a3a"/></linearGradient></defs><rect x="8" y="10" width="98" height="93" fill="#404040" opacity="0.75" filter="url(#sh)"/><rect x="2" y="7" width="97" height="91" fill="url(#fb)"/><path d="M2 16 Q2 7 6 4 L6 2 L34 2 L36 7 L38 8 L12 8 Q4 10 2 18 Z" fill="url(#tb)"/></svg><svg class="th" style="left:135px;top:429px" width="33" height="33" viewBox="0 0 33 33" preserveAspectRatio="none"><rect width="33" height="33" fill="#d8bc88"/><path d="M16.5 3 L30 16.5 L16.5 30 L3 16.5Z" fill="#f0dcb0"/><path d="M16.5 6 L27 16.5 L16.5 27 L6 16.5Z" fill="#c87028"/><path d="M16.5 6 L27 16.5 L16.5 16.5Z" fill="#d88840" opacity="0.7"/></svg><svg class="th" style="left:184px;top:429px" width="33" height="33" viewBox="0 0 33 33" preserveAspectRatio="none"><rect width="33" height="33" fill="#cbbab2"/><rect x="0" y="0" width="16" height="16" fill="#d6c8c0"/><rect x="17" y="17" width="16" height="16" fill="#d2c4bc"/><path d="M16.5 0V33M0 16.5H33" stroke="#b8a8a0"/></svg><svg class="th" style="left:135px;top:471px" width="33" height="33" viewBox="0 0 33 33" preserveAspectRatio="none"><rect width="33" height="33" fill="#7c94c4"/><path d="M0 11h33M0 22h33M11 0v11M22 0v11M5 11v11M16 11v11M27 11v11M11 22v11M22 22v11" stroke="#3a4270" stroke-width="1.3"/></svg><svg class="th" style="left:184px;top:471px" width="33" height="33" viewBox="0 0 33 33" preserveAspectRatio="none"><rect width="33" height="33" fill="#c88848"/><rect x="0" y="0" width="16" height="8" fill="#b87038"/><rect x="17" y="0" width="8" height="16" fill="#e0b070"/><rect x="25" y="0" width="8" height="16" fill="#c88040"/><rect x="0" y="8" width="8" height="25" fill="#d89858"/><rect x="8" y="8" width="8" height="16" fill="#b07038"/><rect x="16" y="16" width="17" height="8" fill="#e0b878"/><rect x="8" y="24" width="25" height="9" fill="#c07840"/><rect x="16" y="24" width="8" height="9" fill="#e8c088"/></svg><div class="a lbl" style="left:124px;top:518px">Tile</div>
<svg class="a" style="left:10px;top:541px" width="112" height="112" viewBox="0 0 112 112"><defs><filter id="sh" x="-20%" y="-20%" width="150%" height="150%"><feGaussianBlur stdDeviation="2.2"/></filter><linearGradient id="fb" x1="0" y1="0" x2="0.4" y2="1"><stop offset="0" stop-color="#fff8d8"/><stop offset="0.55" stop-color="#fdf2c0"/><stop offset="1" stop-color="#e8cc98"/></linearGradient><linearGradient id="tb" x1="0" y1="0" x2="0" y2="1"><stop offset="0" stop-color="#b89870"/><stop offset="1" stop-color="#7a5a3a"/></linearGradient></defs><rect x="8" y="10" width="98" height="93" fill="#404040" opacity="0.75" filter="url(#sh)"/><rect x="2" y="7" width="97" height="91" fill="url(#fb)"/><path d="M2 16 Q2 7 6 4 L6 2 L34 2 L36 7 L38 8 L12 8 Q4 10 2 18 Z" fill="url(#tb)"/></svg><svg class="th" style="left:15px;top:561px" width="41" height="33" viewBox="0 0 41 33" preserveAspectRatio="none"><defs><filter id="w1" x="0" y="0" width="100%" height="100%"><feTurbulence type="fractalNoise" baseFrequency="0.6 0.04" numOctaves="3" seed="3"/><feColorMatrix values="0 0 0 0 0.3  0 0 0 0 0.12  0 0 0 0 0.08  -3.5 0 0 0 1.9"/></filter></defs><rect width="41" height="33" fill="#a85030"/><rect width="41" height="33" filter="url(#w1)"/></svg><svg class="th" style="left:68px;top:561px" width="33" height="33" viewBox="0 0 33 33" preserveAspectRatio="none"><defs><filter id="w2" x="0" y="0" width="100%" height="100%"><feTurbulence type="fractalNoise" baseFrequency="0.4 0.06" numOctaves="3" seed="4"/><feColorMatrix values="0 0 0 0 0.7  0 0 0 0 0.6  0 0 0 0 0.4  -3 0 0 0 1.7"/></filter></defs><rect width="33" height="33" fill="#dcc48e"/><rect width="33" height="33" filter="url(#w2)"/></svg><svg class="th" style="left:15px;top:606px" width="41" height="27" viewBox="0 0 41 27" preserveAspectRatio="none"><defs><filter id="w3" x="0" y="0" width="100%" height="100%"><feTurbulence type="fractalNoise" baseFrequency="0.05 0.5" numOctaves="3" seed="5"/><feColorMatrix values="0 0 0 0 0.2  0 0 0 0 0.05  0 0 0 0 0.05  -3 0 0 0 1.8"/></filter></defs><rect width="41" height="27" fill="#5a1e1a"/><rect width="41" height="27" filter="url(#w3)"/></svg><svg class="th" style="left:68px;top:603px" width="33" height="33" viewBox="0 0 33 33" preserveAspectRatio="none"><defs><filter id="w4" x="0" y="0" width="100%" height="100%"><feTurbulence type="fractalNoise" baseFrequency="0.3" numOctaves="3" seed="6"/><feColorMatrix values="0 0 0 0 0.95  0 0 0 0 0.7  0 0 0 0 0.35  4 0 0 0 -2.0"/></filter></defs><rect width="33" height="33" fill="#b0501c"/><rect width="33" height="33" filter="url(#w4)"/></svg><div class="a lbl" style="left:8px;top:650px">Wood</div>
<svg class="a" style="left:126px;top:541px" width="110" height="110" viewBox="0 0 110 110"><defs><filter id="sh2"><feGaussianBlur stdDeviation="2.2"/></filter></defs><rect x="8" y="8" width="98" height="98" fill="#404040" opacity="0.75" filter="url(#sh2)"/><rect x="2.5" y="2.5" width="98" height="98" fill="#fff" stroke="#000"/><defs><linearGradient id="fy" x1="0" y1="0" x2="0.3" y2="1"><stop offset="0" stop-color="#ffe020"/><stop offset="0.6" stop-color="#f4d000"/><stop offset="1" stop-color="#e0b400"/></linearGradient></defs><path d="M5.5,32.3 L17.8,42.9 Q14,33 20.8,21.6 Q30,15 48,15.5 Q66,18 77.3,27.7 Q87,40 92.5,58.2 Q96,66 99.4,71.9 Q92,77 79,82 Q55,88 30,84 Q14,80 10,70 Q8,66 8.6,65.7 L17.8,56 L4.8,62.8 Z" fill="url(#fy)"/><path d="M5.5,32.3 L9,45 L4.8,62.8" fill="#302810" opacity="0.7"/><path d="M38 30 Q41 55 38 80M44 28 Q48 55 44 82M50 27 Q54 55 50 83M56 28 Q60 55 56 83M62 30 Q66 55 62 82M68 33 Q72 55 69 80M74 38 Q77 55 75 72" stroke="#c8a000" stroke-width="1" fill="none" opacity="0.6" stroke-dasharray="2 1.5"/><path d="M77.3,58.2 L87,55.5 L94,61 L89,70 L80,75 L77,66 Z" fill="#98a8b8"/><circle cx="89.5" cy="62.5" r="2" fill="#202020"/></svg>
<div class="a" style="left:162px;top:650px;width:41px;height:13px;background:#c4c8d0"></div>
<div class="a lbl" style="left:124px;top:650px">Fish.pcx</div>
<div class="a" style="left:288px;top:83px;width:704px;height:613px;background:#013846;overflow:hidden">
<svg class="a" style="left:0;top:0" width="704" height="613" viewBox="288 83 704 613"><line x1="116.6" y1="589.1" x2="874.7" y2="550.7" stroke="#0a1a3a" stroke-width="1.2"/><line x1="94.0" y1="608.7" x2="907.6" y2="564.2" stroke="#0a1a3a" stroke-width="1.2"/><line x1="67.3" y1="631.9" x2="945.4" y2="579.6" stroke="#0a1a3a" stroke-width="1.2"/><line x1="35.3" y1="659.8" x2="989.1" y2="597.5" stroke="#0a1a3a" stroke-width="1.2"/><line x1="-3.8" y1="693.7" x2="1040.2" y2="618.4" stroke="#0a1a3a" stroke-width="1.2"/><line x1="185.8" y1="585.6" x2="97.9" y2="686.4" stroke="#0a1a3a" stroke-width="1.2"/><line x1="252.8" y1="582.2" x2="195.2" y2="679.4" stroke="#0a1a3a" stroke-width="1.2"/><line x1="317.9" y1="578.9" x2="288.4" y2="672.6" stroke="#0a1a3a" stroke-width="1.2"/><line x1="381.0" y1="575.7" x2="377.7" y2="666.2" stroke="#0a1a3a" stroke-width="1.2"/><line x1="442.3" y1="572.6" x2="463.4" y2="660.0" stroke="#0a1a3a" stroke-width="1.2"/><line x1="501.8" y1="569.6" x2="545.6" y2="654.1" stroke="#0a1a3a" stroke-width="1.2"/><line x1="559.6" y1="566.6" x2="624.6" y2="648.4" stroke="#0a1a3a" stroke-width="1.2"/><line x1="615.8" y1="563.8" x2="700.5" y2="642.9" stroke="#0a1a3a" stroke-width="1.2"/><line x1="670.4" y1="561.0" x2="773.6" y2="637.6" stroke="#0a1a3a" stroke-width="1.2"/><line x1="723.6" y1="558.3" x2="844.0" y2="632.5" stroke="#0a1a3a" stroke-width="1.2"/><line x1="775.3" y1="555.7" x2="911.8" y2="627.6" stroke="#0a1a3a" stroke-width="1.2"/><line x1="825.6" y1="553.2" x2="977.2" y2="622.9" stroke="#0a1a3a" stroke-width="1.2"/><line x1="874.7" y1="550.7" x2="1040.2" y2="618.4" stroke="#0a1a3a" stroke-width="1.2"/><line x1="317.9" y1="578.9" x2="317.9" y2="556.9" stroke="#0a1a3a" stroke-width="1.2"/><line x1="381.0" y1="575.7" x2="381.0" y2="553.7" stroke="#0a1a3a" stroke-width="1.2"/><line x1="442.3" y1="572.6" x2="442.3" y2="550.6" stroke="#0a1a3a" stroke-width="1.2"/><line x1="501.8" y1="569.6" x2="501.8" y2="547.6" stroke="#0a1a3a" stroke-width="1.2"/><line x1="559.6" y1="566.6" x2="559.6" y2="544.6" stroke="#0a1a3a" stroke-width="1.2"/><line x1="615.8" y1="563.8" x2="615.8" y2="541.8" stroke="#0a1a3a" stroke-width="1.2"/><line x1="670.4" y1="561.0" x2="670.4" y2="539.0" stroke="#0a1a3a" stroke-width="1.2"/><line x1="723.6" y1="558.3" x2="723.6" y2="536.3" stroke="#0a1a3a" stroke-width="1.2"/><line x1="775.3" y1="555.7" x2="775.3" y2="533.7" stroke="#0a1a3a" stroke-width="1.2"/><line x1="825.6" y1="553.2" x2="825.6" y2="531.2" stroke="#0a1a3a" stroke-width="1.2"/><line x1="874.7" y1="550.7" x2="874.7" y2="528.7" stroke="#0a1a3a" stroke-width="1.2"/><line x1="583.3" y1="599.3" x2="583.3" y2="603.3" stroke="#0a1a3a" stroke-width="1"/><line x1="595.8" y1="598.6" x2="595.8" y2="602.6" stroke="#0a1a3a" stroke-width="1"/><line x1="608.3" y1="597.8" x2="608.3" y2="601.8" stroke="#0a1a3a" stroke-width="1"/><line x1="620.8" y1="597.1" x2="620.8" y2="601.1" stroke="#0a1a3a" stroke-width="1"/><line x1="633.3" y1="596.3" x2="633.3" y2="600.3" stroke="#0a1a3a" stroke-width="1"/><line x1="645.8" y1="595.6" x2="645.8" y2="599.6" stroke="#0a1a3a" stroke-width="1"/><line x1="658.3" y1="594.8" x2="658.3" y2="598.8" stroke="#0a1a3a" stroke-width="1"/><line x1="670.8" y1="594.1" x2="670.8" y2="598.1" stroke="#0a1a3a" stroke-width="1"/><line x1="683.3" y1="593.3" x2="683.3" y2="597.3" stroke="#0a1a3a" stroke-width="1"/><line x1="695.8" y1="592.5" x2="695.8" y2="596.5" stroke="#0a1a3a" stroke-width="1"/><line x1="708.3" y1="591.8" x2="708.3" y2="595.8" stroke="#0a1a3a" stroke-width="1"/><line x1="720.8" y1="591.0" x2="720.8" y2="595.0" stroke="#0a1a3a" stroke-width="1"/><line x1="733.3" y1="590.3" x2="733.3" y2="594.3" stroke="#0a1a3a" stroke-width="1"/><line x1="745.8" y1="589.5" x2="745.8" y2="593.5" stroke="#0a1a3a" stroke-width="1"/><line x1="758.3" y1="588.8" x2="758.3" y2="592.8" stroke="#0a1a3a" stroke-width="1"/><line x1="770.8" y1="588.0" x2="770.8" y2="592.0" stroke="#0a1a3a" stroke-width="1"/><line x1="783.3" y1="587.3" x2="783.3" y2="591.3" stroke="#0a1a3a" stroke-width="1"/><line x1="795.8" y1="586.5" x2="795.8" y2="590.5" stroke="#0a1a3a" stroke-width="1"/><line x1="808.3" y1="585.8" x2="808.3" y2="589.8" stroke="#0a1a3a" stroke-width="1"/><rect x="567.5" y="598.5" width="7" height="7" fill="#0a1a2a" stroke="#e0e020" stroke-width="1.5"/><rect x="817.5" y="583.5" width="7" height="7" fill="#0a1a2a" stroke="#e0e020" stroke-width="1.5"/><text x="571.5" y="622.5" font-size="11" fill="#0a1628" font-family="Liberation Sans" transform="translate(571.5 0) scale(0.85 1) translate(-571.5 0)">20</text><text x="821" y="607" font-size="11" fill="#0a1628" font-family="Liberation Sans" transform="translate(821 0) scale(0.85 1) translate(-821 0)">0</text><path d="M314,678 L317.5,683 L321,678 M317.5,683 L317.5,688 M317.5,690 L317.5,696" stroke="#20b040" stroke-width="1.3" fill="none"/></svg>
<svg class="a" style="left:0;top:0" width="704" height="613" viewBox="288 83 704 613">
<defs>
<clipPath id="dc"><path d="M311.5,290 C312,277 318,267 330,261 C345,256 362,255 378,254 C392,249 402,241 417,240
C437,236 450,229 463,229 C480,230 496,243 515,254 C535,262 565,265 610,266
C660,270 700,277 750,281 C780,283 805,290 835,304 C870,316 900,326 940,332 L996,340 L996,403
C960,406 930,410 900,414 C885,417 872,420 863,423
C875,430 886,440 892,458 C898,475 902,492 904,508 C910,520 912,530 912.5,537 C911,555 910,570 909.6,578
L903.7,593 L897.8,578 L889,584 L880.3,613.4 C876,600 874,594 874.4,587 C872,575 871,565 871.5,560.6
C873,540 874,528 874.4,516.7 C876,505 877,500 877.3,496 C876,488 875,482 874.4,478.6
C860,476 850,474 845,472.7 C825,471 812,469 804,467 C795,461 786,455 780.6,449.3 C778,446 774,443 770,442
C755,438 740,437 725,440 C730,455 735,468 739,480 C744,488 747,494 748,500 C748,504 747,507 746.3,509
C743,514 740,519 739,525 L740,577 L737,585 C725,586 715,587 706.6,588 L683,593 L667,595.5 L667,588 L663.3,583 L636,584.6
L663,568.4 L674,566.6 L692,563 C695,559 697,556 699.4,552 L706.6,527 L706.6,509 C704,505 701,501 697.6,498
C692,492 686,486 679.5,480 C672,472 666,463 660,455 C653,447 647,440 640,434.6
C630,430 625,428 620,427 C600,418 585,410 577,408 C565,404 555,401 547,398
L537,399 L534,393 L537,387
C530,380 525,375 521,371 C512,362 505,353 500,349 C488,342 475,335 466,334
C458,332 450,330 441,332 C436,336 428,338 417,338 C400,335 390,332 380,331
C360,329 340,328 331,324 C325,320 320,313 314,303 C312,298 311.5,294 311.5,290 Z"/></clipPath>
<filter id="b0" x="-50%" y="-50%" width="200%" height="200%"><feGaussianBlur stdDeviation="0.6"/></filter>
<filter id="b1" x="-50%" y="-50%" width="200%" height="200%"><feGaussianBlur stdDeviation="1"/></filter>
<filter id="b2" x="-50%" y="-50%" width="200%" height="200%"><feGaussianBlur stdDeviation="2"/></filter>
<filter id="b3" x="-50%" y="-50%" width="200%" height="200%"><feGaussianBlur stdDeviation="3"/></filter>
<filter id="b4" x="-50%" y="-50%" width="200%" height="200%"><feGaussianBlur stdDeviation="4"/></filter>
<filter id="b5" x="-50%" y="-50%" width="200%" height="200%"><feGaussianBlur stdDeviation="5"/></filter>
<filter id="b6" x="-50%" y="-50%" width="200%" height="200%"><feGaussianBlur stdDeviation="6"/></filter>
<filter id="b8" x="-50%" y="-50%" width="200%" height="200%"><feGaussianBlur stdDeviation="8"/></filter>
<filter id="b10" x="-50%" y="-50%" width="200%" height="200%"><feGaussianBlur stdDeviation="10"/></filter>
<filter id="b12" x="-50%" y="-50%" width="200%" height="200%"><feGaussianBlur stdDeviation="12"/></filter>
<filter id="tex" x="0" y="0" width="100%" height="100%"><feTurbulence type="fractalNoise" baseFrequency="0.04 0.025" numOctaves="2" seed="5"/><feColorMatrix values="0 0 0 0 0.15  0 0 0 0 0.12  0 0 0 0 0.1  0 0 0 -2.2 1.25"/></filter>
</defs>
<path d="M311.5,290 C312,277 318,267 330,261 C345,256 362,255 378,254 C392,249 402,241 417,240
C437,236 450,229 463,229 C480,230 496,243 515,254 C535,262 565,265 610,266
C660,270 700,277 750,281 C780,283 805,290 835,304 C870,316 900,326 940,332 L996,340 L996,403
C960,406 930,410 900,414 C885,417 872,420 863,423
C875,430 886,440 892,458 C898,475 902,492 904,508 C910,520 912,530 912.5,537 C911,555 910,570 909.6,578
L903.7,593 L897.8,578 L889,584 L880.3,613.4 C876,600 874,594 874.4,587 C872,575 871,565 871.5,560.6
C873,540 874,528 874.4,516.7 C876,505 877,500 877.3,496 C876,488 875,482 874.4,478.6
C860,476 850,474 845,472.7 C825,471 812,469 804,467 C795,461 786,455 780.6,449.3 C778,446 774,443 770,442
C755,438 740,437 725,440 C730,455 735,468 739,480 C744,488 747,494 748,500 C748,504 747,507 746.3,509
C743,514 740,519 739,525 L740,577 L737,585 C725,586 715,587 706.6,588 L683,593 L667,595.5 L667,588 L663.3,583 L636,584.6
L663,568.4 L674,566.6 L692,563 C695,559 697,556 699.4,552 L706.6,527 L706.6,509 C704,505 701,501 697.6,498
C692,492 686,486 679.5,480 C672,472 666,463 660,455 C653,447 647,440 640,434.6
C630,430 625,428 620,427 C600,418 585,410 577,408 C565,404 555,401 547,398
L537,399 L534,393 L537,387
C530,380 525,375 521,371 C512,362 505,353 500,349 C488,342 475,335 466,334
C458,332 450,330 441,332 C436,336 428,338 417,338 C400,335 390,332 380,331
C360,329 340,328 331,324 C325,320 320,313 314,303 C312,298 311.5,294 311.5,290 Z" fill="#40362f"/>
<g clip-path="url(#dc)">
<path d="M312,290 C315,268 340,258 380,254 C420,246 445,255 455,290 C462,325 440,340 405,336 C360,332 330,326 314,305 Z" fill="#765e56" filter="url(#b4)" opacity="1.0"/>
<path d="M322,292 C322,278 332,266 350,264 C365,262 378,262 390,266" stroke="#a08a82" stroke-width="5" fill="none" stroke-linecap="round" filter="url(#b2)" opacity="0.9"/>
<path d="M330,284 C345,274 365,272 385,276" stroke="#4a3c38" stroke-width="5" fill="none" stroke-linecap="round" filter="url(#b2)" opacity="0.7"/>
<path d="M405,250 C420,245 440,245 455,255" stroke="#6e5a54" stroke-width="6" fill="none" stroke-linecap="round" filter="url(#b3)" opacity="0.8"/>
<path d="M380,262 C386,254 402,252 410,258 C416,268 408,278 394,277 C384,276 378,270 380,262 Z" fill="#2a2220" filter="url(#b3)" opacity="0.95"/>
<path d="M415,272 C422,276 430,278 437,276" stroke="#9a8880" stroke-width="5" fill="none" stroke-linecap="round" filter="url(#b3)" opacity="0.7"/>
<path d="M330,323 C355,332 395,335 432,332" stroke="#9a7c72" stroke-width="8" fill="none" stroke-linecap="round" filter="url(#b3)" opacity="0.95"/>
<path d="M350,309 C375,314 405,318 440,300" stroke="#2e2826" stroke-width="7" fill="none" stroke-linecap="round" filter="url(#b3)" opacity="0.85"/>
<path d="M440,260 C460,255 470,280 465,310 C455,330 440,330 435,310 C432,290 430,270 440,260 Z" fill="#5e4c46" filter="url(#b6)" opacity="0.8"/>
<path d="M372,296 C395,285 425,280 445,286 C452,300 440,318 420,322 C400,322 380,314 372,296 Z" fill="#302826" filter="url(#b4)" opacity="0.75"/>
<path d="M335,262 C350,258 370,256 392,256" stroke="#a89088" stroke-width="3" fill="none" stroke-linecap="round" filter="url(#b2)" opacity="0.8"/>
<path d="M313,300 C330,302 345,305 358,304 C365,302 372,298 380,299 C392,302 400,306 410,304 C420,300 432,292 441,289" stroke="#201a1a" stroke-width="2.5" fill="none"/>
<path d="M315,300.7 l1.5,4 l1.5,-4" fill="#d8d0c8"/><path d="M320,301.1 l1.5,4 l1.5,-4" fill="#d8d0c8"/><path d="M325,301.5 l1.5,4 l1.5,-4" fill="#d8d0c8"/><path d="M330,301.9 l1.5,4 l1.5,-4" fill="#d8d0c8"/><path d="M335,302.3 l1.5,4 l1.5,-4" fill="#d8d0c8"/><path d="M340,302.7 l1.5,4 l1.5,-4" fill="#d8d0c8"/><path d="M345,303.1 l1.5,4 l1.5,-4" fill="#d8d0c8"/><path d="M350,303.5 l1.5,4 l1.5,-4" fill="#d8d0c8"/><path d="M355,303.9 l1.5,4 l1.5,-4" fill="#d8d0c8"/><path d="M360,304.3 l1.5,4 l1.5,-4" fill="#d8d0c8"/><path d="M365,304.7 l1.5,4 l1.5,-4" fill="#d8d0c8"/><path d="M370,305.1 l1.5,4 l1.5,-4" fill="#d8d0c8"/><path d="M375,305.5 l1.5,4 l1.5,-4" fill="#d8d0c8"/>
<circle cx="394" cy="264.5" r="3" fill="#e0c040"/><circle cx="395" cy="264.5" r="1.1" fill="#000"/>
<path d="M470,232 C520,245 560,262 640,268 C700,274 740,280 760,290 L760,300 C700,300 640,300 560,296 C520,290 480,270 470,250 Z" fill="#2a2320" filter="url(#b5)" opacity="0.8"/>
<path d="M452,250 C458,258 464,268 470,280" stroke="#8a8078" stroke-width="5" fill="none" stroke-linecap="round" filter="url(#b3)" opacity="0.6"/>
<path d="M479,269 C500,275 518,281 540,285 C560,287 580,286 600,284 C610,283 615,281 620,280" stroke="#aaa298" stroke-width="5" fill="none" stroke-linecap="round" filter="url(#b2)" opacity="0.9"/>
<path d="M442,248 C455,252 470,256 485,262" stroke="#7a706a" stroke-width="4" fill="none" stroke-linecap="round" filter="url(#b2)" opacity="0.6"/>
<path d="M462,298 C485,315 505,335 525,362" stroke="#8e7870" stroke-width="9" fill="none" stroke-linecap="round" filter="url(#b4)" opacity="0.8"/>
<path d="M455,322 C475,335 495,350 515,372 C522,380 530,386 536,388" stroke="#a08a82" stroke-width="5" fill="none" stroke-linecap="round" filter="url(#b2)" opacity="0.75"/>
<path d="M470,292 C490,300 510,315 530,332" stroke="#9a8680" stroke-width="3" fill="none" stroke-linecap="round" filter="url(#b2)" opacity="0.6"/>
<path d="M420,262 C428,270 432,285 430,300" stroke="#8a7a72" stroke-width="8" fill="none" stroke-linecap="round" filter="url(#b4)" opacity="0.6"/>
<path d="M480,300 C500,312 520,330 540,350" stroke="#2e2624" stroke-width="3" fill="none" stroke-linecap="round" filter="url(#b2)" opacity="0.6"/>
<path d="M650,282 C680,284 710,288 730,292" stroke="#8a8078" stroke-width="3" fill="none" stroke-linecap="round" filter="url(#b2)" opacity="0.5"/>
<path d="M585,298 C630,290 690,294 725,308 C735,340 730,375 715,392 C670,392 620,388 592,382 C578,350 576,320 585,298 Z" fill="#58554c" filter="url(#b10)" opacity="0.85"/>
<path d="M600,322 C598,347 604,345 601,370" stroke="#a09c90" stroke-width="5" fill="none" stroke-linecap="round" filter="url(#b3)" opacity="0.45"/>
<path d="M613,308 C611,333 617,353 614,378" stroke="#a09c90" stroke-width="6" fill="none" stroke-linecap="round" filter="url(#b3)" opacity="0.6"/>
<path d="M628,302 C626,327 632,359 629,384" stroke="#a09c90" stroke-width="5" fill="none" stroke-linecap="round" filter="url(#b3)" opacity="0.5"/>
<path d="M643,306 C641,331 647,361 644,386" stroke="#a09c90" stroke-width="7" fill="none" stroke-linecap="round" filter="url(#b3)" opacity="0.7"/>
<path d="M660,300 C658,325 664,355 661,380" stroke="#a09c90" stroke-width="5" fill="none" stroke-linecap="round" filter="url(#b3)" opacity="0.5"/>
<path d="M676,310 C674,335 680,359 677,384" stroke="#a09c90" stroke-width="6" fill="none" stroke-linecap="round" filter="url(#b3)" opacity="0.6"/>
<path d="M692,318 C690,343 696,353 693,378" stroke="#a09c90" stroke-width="5" fill="none" stroke-linecap="round" filter="url(#b3)" opacity="0.45"/>
<path d="M706,326 C704,351 710,347 707,372" stroke="#a09c90" stroke-width="4" fill="none" stroke-linecap="round" filter="url(#b3)" opacity="0.35"/>
<path d="M606,315 C605,340 609,350 608,375" stroke="#2e2a26" stroke-width="4" fill="none" stroke-linecap="round" filter="url(#b2)" opacity="0.5"/>
<path d="M620,305 C619,330 623,355 622,380" stroke="#2e2a26" stroke-width="4" fill="none" stroke-linecap="round" filter="url(#b2)" opacity="0.5"/>
<path d="M636,308 C635,333 639,359 638,384" stroke="#2e2a26" stroke-width="4" fill="none" stroke-linecap="round" filter="url(#b2)" opacity="0.5"/>
<path d="M652,302 C651,327 655,355 654,380" stroke="#2e2a26" stroke-width="4" fill="none" stroke-linecap="round" filter="url(#b2)" opacity="0.5"/>
<path d="M668,306 C667,331 671,358 670,383" stroke="#2e2a26" stroke-width="4" fill="none" stroke-linecap="round" filter="url(#b2)" opacity="0.5"/>
<path d="M684,312 C683,337 687,355 686,380" stroke="#2e2a26" stroke-width="4" fill="none" stroke-linecap="round" filter="url(#b2)" opacity="0.5"/>
<path d="M699,318 C698,343 702,351 701,376" stroke="#2e2a26" stroke-width="4" fill="none" stroke-linecap="round" filter="url(#b2)" opacity="0.5"/>
<path d="M540,284 C565,281 590,282 615,287" stroke="#8a8078" stroke-width="3" fill="none" stroke-linecap="round" filter="url(#b2)" opacity="0.5"/>
<path d="M600,395 C640,400 680,405 720,408" stroke="#2e2824" stroke-width="10" fill="none" stroke-linecap="round" filter="url(#b5)" opacity="0.7"/>
<path d="M585,372 C630,380 690,388 740,392 L745,425 C700,420 640,408 585,392 Z" fill="#2e2826" filter="url(#b5)" opacity="0.75"/>
<path d="M540,394 C580,398 620,406 660,414 C700,424 740,432 776,440 L776,450 L700,446 C660,440 620,430 580,418 L540,404 Z" fill="#84706a" filter="url(#b2)" opacity="0.95"/>
<path d="M560,392 C600,400 650,412 700,425 C730,432 755,438 772,442" stroke="#2a2220" stroke-width="2.5" fill="none" stroke-linecap="round" filter="url(#b1)" opacity="0.8"/>
<path d="M690,434 C705,437 715,438 725,440" stroke="#b8a49a" stroke-width="4" fill="none" stroke-linecap="round" filter="url(#b2)" opacity="0.85"/>
<path d="M730,424 C742,430 752,434 762,440" stroke="#c0aca2" stroke-width="3" fill="none" stroke-linecap="round" filter="url(#b2)" opacity="0.8"/>
<path d="M560,402 C590,412 620,422 650,430" stroke="#9a8680" stroke-width="3" fill="none" stroke-linecap="round" filter="url(#b2)" opacity="0.7"/>
<path d="M734,283 C742,320 755,365 768,410 C772,425 772,436 771,442 L804,467 L874,478 L892,458 C870,440 850,420 842,400 C838,370 850,330 856,322 C820,296 780,285 734,283 Z" fill="#3a302a" filter="url(#b3)" opacity="0.9"/>
<path d="M734,290 C742,325 755,370 768,412" stroke="#241e1a" stroke-width="2" fill="none" stroke-linecap="round" filter="url(#b1)" opacity="0.6"/>
<path d="M856,322 C848,350 842,385 838,420" stroke="#2a221e" stroke-width="2" fill="none" stroke-linecap="round" filter="url(#b2)" opacity="0.6"/>
<ellipse cx="780" cy="330" rx="14" ry="10" fill="#262019" filter="url(#b4)" opacity="0.6"/>
<ellipse cx="810" cy="360" rx="12" ry="14" fill="#262019" filter="url(#b4)" opacity="0.6"/>
<ellipse cx="790" cy="410" rx="10" ry="12" fill="#262019" filter="url(#b4)" opacity="0.6"/>
<ellipse cx="830" cy="450" rx="14" ry="8" fill="#262019" filter="url(#b4)" opacity="0.6"/>
<ellipse cx="760" cy="360" rx="8" ry="12" fill="#262019" filter="url(#b4)" opacity="0.6"/>
<ellipse cx="820" cy="310" rx="10" ry="7" fill="#262019" filter="url(#b4)" opacity="0.6"/>
<path d="M856,322 C900,330 950,338 996,340 L996,403 C960,406 930,410 900,414 C880,418 860,421 840,421 C838,390 845,350 856,322 Z" fill="#3e342e" filter="url(#b2)" opacity="0.7"/>
<path d="M845,410 C890,406 940,400 1000,395" stroke="#6a5a54" stroke-width="16" fill="none" stroke-linecap="round" filter="url(#b6)" opacity="0.8"/>
<path d="M860,418 C900,414 950,408 1000,404" stroke="#8a7a72" stroke-width="4" fill="none" stroke-linecap="round" filter="url(#b2)" opacity="0.6"/>
<path d="M878,338 C880,350 882,365 881,378" stroke="#2a231e" stroke-width="9" fill="none" stroke-linecap="round" filter="url(#b5)" opacity="0.4"/>
<path d="M910,338 C912,350 914,365 913,378" stroke="#2a231e" stroke-width="9" fill="none" stroke-linecap="round" filter="url(#b5)" opacity="0.3"/>
<path d="M938,338 C940,350 942,365 941,378" stroke="#2a231e" stroke-width="9" fill="none" stroke-linecap="round" filter="url(#b5)" opacity="0.4"/>
<path d="M968,338 C970,350 972,365 971,378" stroke="#2a231e" stroke-width="9" fill="none" stroke-linecap="round" filter="url(#b5)" opacity="0.3"/>
<path d="M834,424 C840,418 856,418 864,426 C870,434 866,444 855,446 C842,446 834,436 834,424 Z" fill="#4e423c" filter="url(#b1)" opacity="0.9"/>
<path d="M840,425 C846,422 854,422 860,426" stroke="#7a6a62" stroke-width="3" fill="none" stroke-linecap="round" filter="url(#b2)" opacity="0.7"/>
<path d="M553,346 C570,342 590,355 597,375 C600,388 592,396 578,396 C565,394 556,380 552,365 C550,355 550,350 553,346 Z" fill="#4e403a" stroke="#241c1a" stroke-width="1.2" opacity="0.9" filter="url(#b0)"/>
<path d="M560,352 C575,356 585,368 590,380" stroke="#6a5a52" stroke-width="4" fill="none" stroke-linecap="round" filter="url(#b2)" opacity="0.7"/>
<path d="M596,384 C580,386 560,386 540,387 L537,388 L537,399 L555,397 C575,396 590,396 598,392 Z" fill="#4a3c36" stroke="#241c1a" stroke-width="0.8" opacity="0.9" filter="url(#b0)"/>
<path d="M645,438 C680,440 725,440 730,466 C745,495 748,520 745,540 C730,545 712,540 707,531 L707,508 C700,490 670,465 645,438 Z" fill="#5e4e48" filter="url(#b5)" opacity="0.9"/>
<path d="M668,452 C690,468 708,488 720,508" stroke="#907c72" stroke-width="9" fill="none" stroke-linecap="round" filter="url(#b4)" opacity="0.8"/>
<path d="M700,445 C715,460 728,480 738,505" stroke="#7a665e" stroke-width="6" fill="none" stroke-linecap="round" filter="url(#b4)" opacity="0.7"/>
<path d="M707,509 L746,509" stroke="#4a3c36" stroke-width="1.5" fill="none" stroke-linecap="round" filter="url(#b1)" opacity="0.7"/>
<path d="M712,512 L738,512 L738,580 L712,585 Z" fill="#8e7c72" filter="url(#b3)" opacity="0.75"/>
<path d="M722,520 C728,535 730,545 726,560" stroke="#b0a096" stroke-width="4" fill="none" stroke-linecap="round" filter="url(#b3)" opacity="0.6"/>
<path d="M715,528 C712,531 709,533 706,534" stroke="#2a2220" stroke-width="2.5" fill="none" stroke-linecap="round" filter="url(#b1)" opacity="0.9"/>
<path d="M710,536 C707,539 704,541 701,542" stroke="#2a2220" stroke-width="2.5" fill="none" stroke-linecap="round" filter="url(#b1)" opacity="0.9"/>
<path d="M705,544 C702,547 699,549 696,550" stroke="#2a2220" stroke-width="2.5" fill="none" stroke-linecap="round" filter="url(#b1)" opacity="0.9"/>
<path d="M700,552 C697,555 694,557 691,558" stroke="#2a2220" stroke-width="2.5" fill="none" stroke-linecap="round" filter="url(#b1)" opacity="0.9"/>
<path d="M695,560 C692,563 689,565 686,566" stroke="#2a2220" stroke-width="2.5" fill="none" stroke-linecap="round" filter="url(#b1)" opacity="0.9"/>
<path d="M690,568 C687,571 684,573 681,574" stroke="#2a2220" stroke-width="2.5" fill="none" stroke-linecap="round" filter="url(#b1)" opacity="0.9"/>
<path d="M712,530 C706,548 696,560 684,568" stroke="#3a302c" stroke-width="3" fill="none" stroke-linecap="round" filter="url(#b1)" opacity="0.8"/>
<path d="M720,545 C716,565 706,578 690,588" stroke="#2e2624" stroke-width="4" fill="none" stroke-linecap="round" filter="url(#b1)" opacity="0.85"/>
<path d="M668,575 C680,574 692,572 700,568" stroke="#9a8880" stroke-width="4" fill="none" stroke-linecap="round" filter="url(#b2)" opacity="0.7"/>
<path d="M678,588 C690,586 700,582 708,578" stroke="#8a786e" stroke-width="3" fill="none" stroke-linecap="round" filter="url(#b2)" opacity="0.6"/>
<path d="M732,548 C734,552 734,556 732,560" stroke="#2a2220" stroke-width="3" fill="none" stroke-linecap="round" filter="url(#b1)" opacity="0.8"/>
<path d="M636,584.6 L658,570 L666,572 L664,583 Z M667,595.5 L672,587 L684,586 L683,593 Z" fill="#2a2624"/>
<path d="M874,480 C880,490 895,495 904,508 C912,530 912,560 909,578 L875,585 C871,560 873,520 874,480 Z" fill="#5a4c46" filter="url(#b4)" opacity="0.95"/>
<path d="M884,498 C889,520 894,540 896,562" stroke="#a08e84" stroke-width="4" fill="none" stroke-linecap="round" filter="url(#b2)" opacity="0.7"/>
<path d="M877,520 L879,565 M891,505 L894,572 M903,520 L905,565" stroke="#2e2624" stroke-width="1.5" fill="none" stroke-linecap="round" filter="url(#b1)" opacity="0.8"/>
<path d="M876,540 L890,540 M877,555 L891,553 M892,530 L905,530 M893,548 L906,548" stroke="#2e2624" stroke-width="1.2" fill="none" stroke-linecap="round" filter="url(#b1)" opacity="0.6"/>
<path d="M871,566 L880.3,613.4 L887,582 L886,570 Z M895,572 L903.7,593 L909,574 L904,568 Z" fill="#32323a"/>
<path d="M876,578 L880,603" stroke="#8a8a92" stroke-width="1.5" fill="none" stroke-linecap="round" filter="url(#b1)" opacity="0.8"/>
<rect x="300" y="220" width="700" height="400" filter="url(#tex)" opacity="0.4"/>
</g>
<path d="M311.5,290 C312,277 318,267 330,261 C345,256 362,255 378,254 C392,249 402,241 417,240
C437,236 450,229 463,229 C480,230 496,243 515,254 C535,262 565,265 610,266
C660,270 700,277 750,281 C780,283 805,290 835,304 C870,316 900,326 940,332 L996,340 L996,403
C960,406 930,410 900,414 C885,417 872,420 863,423
C875,430 886,440 892,458 C898,475 902,492 904,508 C910,520 912,530 912.5,537 C911,555 910,570 909.6,578
L903.7,593 L897.8,578 L889,584 L880.3,613.4 C876,600 874,594 874.4,587 C872,575 871,565 871.5,560.6
C873,540 874,528 874.4,516.7 C876,505 877,500 877.3,496 C876,488 875,482 874.4,478.6
C860,476 850,474 845,472.7 C825,471 812,469 804,467 C795,461 786,455 780.6,449.3 C778,446 774,443 770,442
C755,438 740,437 725,440 C730,455 735,468 739,480 C744,488 747,494 748,500 C748,504 747,507 746.3,509
C743,514 740,519 739,525 L740,577 L737,585 C725,586 715,587 706.6,588 L683,593 L667,595.5 L667,588 L663.3,583 L636,584.6
L663,568.4 L674,566.6 L692,563 C695,559 697,556 699.4,552 L706.6,527 L706.6,509 C704,505 701,501 697.6,498
C692,492 686,486 679.5,480 C672,472 666,463 660,455 C653,447 647,440 640,434.6
C630,430 625,428 620,427 C600,418 585,410 577,408 C565,404 555,401 547,398
L537,399 L534,393 L537,387
C530,380 525,375 521,371 C512,362 505,353 500,349 C488,342 475,335 466,334
C458,332 450,330 441,332 C436,336 428,338 417,338 C400,335 390,332 380,331
C360,329 340,328 331,324 C325,320 320,313 314,303 C312,298 311.5,294 311.5,290 Z" fill="none" stroke="#1c1816" stroke-width="0.8" opacity="0.8"/>
<path d="M536,390 C526,390 518,393 511,399 C506,403 500,407 496,410" stroke="#1e1816" stroke-width="5" fill="none" stroke-linecap="round"/>
<path d="M536,390 C526,390 518,393 511,399 C506,403 500,407 496,410" stroke="#6a5852" stroke-width="3.2" fill="none" stroke-linecap="round" pathLength="100" stroke-dasharray="80 100"/>
<path d="M536,393 C529,396 522,400 517,405 C514,408 512,411 511,414" stroke="#1e1816" stroke-width="5" fill="none" stroke-linecap="round"/>
<path d="M536,393 C529,396 522,400 517,405 C514,408 512,411 511,414" stroke="#6a5852" stroke-width="3.2" fill="none" stroke-linecap="round" pathLength="100" stroke-dasharray="80 100"/>
<path d="M537,395 C533,399 528,404 524,408 C522,411 521,413 521,415" stroke="#1e1816" stroke-width="5" fill="none" stroke-linecap="round"/>
<path d="M537,395 C533,399 528,404 524,408 C522,411 521,413 521,415" stroke="#6a5852" stroke-width="3.2" fill="none" stroke-linecap="round" pathLength="100" stroke-dasharray="80 100"/>
<path d="M538,396 C536,401 533,406 530,410 C528,413 527,416 527,418" stroke="#1e1816" stroke-width="5" fill="none" stroke-linecap="round"/>
<path d="M538,396 C536,401 533,406 530,410 C528,413 527,416 527,418" stroke="#6a5852" stroke-width="3.2" fill="none" stroke-linecap="round" pathLength="100" stroke-dasharray="80 100"/>
</svg>
<svg class="a" style="left:262px;top:385px" width="13" height="21" viewBox="0 0 13 21"><path d="M0.5 0.5 L0.5 16 L4 12.5 L7 19 L9.5 18 L6.5 11.5 L11.5 11.5 Z" fill="#fff" stroke="#000" stroke-width="1"/></svg>
</div>
<div class="a" style="left:992px;top:83px;width:1px;height:613px;background:#fff"></div>
<div class="a" style="left:993px;top:83px;width:31px;height:613px;background:#e0dfe3"></div>
<div class="a" style="left:994px;top:83px;width:30px;height:172px;border-top:1px solid #fff;border-bottom:1px solid #a0a0a4;border-right:1px solid #a0a0a4"></div>
<div class="a" style="left:998px;top:86px;width:26px;height:3px;border-top:1px solid #fff;border-bottom:1px solid #a0a0a4"></div>
<div class="a" style="left:998px;top:90px;width:26px;height:3px;border-top:1px solid #fff;border-bottom:1px solid #a0a0a4"></div>
<svg class="a" style="left:1000px;top:97px" width="16" height="16" viewBox="0 0 16 16"><path d="M3.5 0.5v13l3-3l2.5 5l2-1l-2.5-4.5h4z" fill="#fff" stroke="#000"/></svg>
<svg class="a" style="left:1000px;top:119px" width="16" height="16" viewBox="0 0 16 16"><rect x="1.5" y="3.5" width="12" height="9" fill="none" stroke="#000" stroke-dasharray="2 1"/></svg>
<svg class="a" style="left:1000px;top:141px" width="16" height="16" viewBox="0 0 16 16"><path d="M4.5 5.5 Q5 1.5 8.5 2.5 Q10 3.5 10 5 Q13 3.5 14.5 7 Q15 10 12.5 12.5 Q10 15 7.5 13.5 Q4 15.5 2 12.5 Q0.5 10 2.5 7.5 Z" fill="none" stroke="#000" stroke-width="1.1"/></svg>
<svg class="a" style="left:1000px;top:163px" width="16" height="16" viewBox="0 0 16 16"><path d="M1.5 6.5l4-5h8v6l-3 2v4h-9z" fill="none" stroke="#000" stroke-width="1.2"/></svg>
<svg class="a" style="left:1000px;top:185px" width="16" height="16" viewBox="0 0 16 16"><path d="M2 7 Q4 2 8 1 Q12 3 13 8 Q10 13 6 13 Q2 12 2 7z" fill="#ff00ff"/><path d="M1 2l13 13M14 2l-13 13" stroke="#000" stroke-width="0.8"/><path d="M7.5 6.5v8l2-2l1.5 3l1-0.5l-1.5-3h3z" fill="#fff" stroke="#000" stroke-width="0.7"/></svg>
<svg class="a" style="left:1000px;top:206px" width="16" height="16" viewBox="0 0 16 16"><circle cx="7.5" cy="8" r="6.5" fill="none" stroke="#a4a4a4" stroke-width="2"/><path d="M4 10 Q6 6 10 5 M5 11 Q9 11 11 7" stroke="#a4a4a4" stroke-width="1.5" fill="none"/></svg>
<svg class="a" style="left:1000px;top:228px" width="16" height="16" viewBox="0 0 16 16"><path d="M4.5 8v-4q0-3 3-3q3 0 3 3" fill="none" stroke="#a0a0a4" stroke-width="1.6"/><path d="M3 8.5h11M3 10.5h11M3 12.5h11M3 14.5h11" stroke="#a0a0a4" stroke-width="1.2"/><path d="M2.5 8v7" stroke="#a0a0a4"/><path d="M3 15.5h11" stroke="#fff"/></svg>
<div class="a" style="left:0;top:696px;width:1024px;height:1px;background:#fff"></div>
<div class="a" style="left:0;top:697px;width:1024px;height:1px;background:#a8a490"></div>
<div class="a" style="left:0;top:698px;width:1024px;height:23px;background:#ece9d8"></div>
<svg class="a" style="left:0px;top:702px" width="6" height="15" viewBox="0 0 6 15"><path d="M-6 0.5h9l2 2v12h-11z" fill="#c0d0f0" stroke="#304080"/><path d="M-3 5h5M-3 8h5M-3 11h5" stroke="#304080"/></svg>
<div class="a" style="left:10px;top:705px;font-size:11px;line-height:13px">Done</div>
<div class="a" style="left:912px;top:700px;width:2px;height:20px;border-left:1px solid #c8c4b0;border-right:1px solid #fff"></div>
<div class="a" style="left:936px;top:700px;width:2px;height:20px;border-left:1px solid #c8c4b0;border-right:1px solid #fff"></div>
<div class="a" style="left:960px;top:700px;width:2px;height:20px;border-left:1px solid #c8c4b0;border-right:1px solid #fff"></div>
<div class="a" style="left:985px;top:700px;width:2px;height:20px;border-left:1px solid #c8c4b0;border-right:1px solid #fff"></div>
<svg class="a" style="left:991px;top:704px" width="13" height="13" viewBox="0 0 13 13"><circle cx="6.5" cy="6.5" r="6" fill="#2040c0"/><path d="M3 3q3-2 4 1q-1 2 2 3q1 3-2 4q-2-2-3-1q-2-3 0-4q-2 0-1-3z" fill="#20c040"/></svg>
<div class="a" style="left:1008px;top:704px;font-size:11px;line-height:13px">Int</div>
</body></html>
